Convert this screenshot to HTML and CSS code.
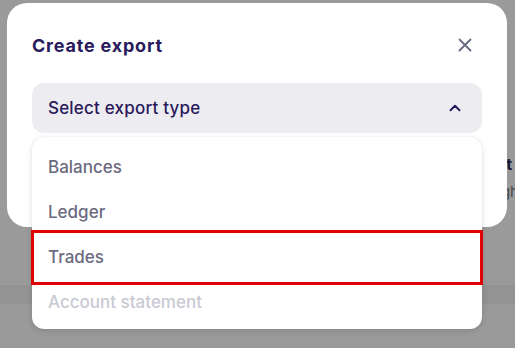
FILE: index.html
```html
<!DOCTYPE html>
<html lang="en">
<head>
  <meta charset="UTF-8">
  <title>Create export</title>
  <link rel="stylesheet" href="styles.css">
</head>
<body>

<div class="page">
  <div class="page-text">
    <div class="page-title">Last export</div>
    <div class="page-sub">Available through</div>
  </div>
  <div class="page-band"></div>
</div>

<div class="modal">
  <div class="modal-head">
    <h3>Create export</h3>
    <svg class="close" width="14" height="14" viewBox="0 0 14 14">
      <path d="M1.5 1.5 L12.5 12.5 M12.5 1.5 L1.5 12.5" stroke="#686a80" stroke-width="1.8" stroke-linecap="round" fill="none"/>
    </svg>
  </div>
  <div class="select">
    <span>Select export type</span>
    <svg width="12" height="8" viewBox="0 0 12 8">
      <path d="M1.5 6.2 L6 1.8 L10.5 6.2" stroke="#2b1a5e" stroke-width="2" stroke-linecap="round" stroke-linejoin="round" fill="none"/>
    </svg>
  </div>

  <div class="menu">
    <div class="item">Balances</div>
    <div class="item">Ledger</div>
    <div class="item marked">Trades</div>
    <div class="item off">Account statement</div>
  </div>
</div>

</body>
</html>
```

FILE: styles.css
```css
body {
  margin: 0;
  width: 515px;
  height: 348px;
  overflow: hidden;
  background-color: #9a9a9a;
  font-family: Inter, "Noto Sans", sans-serif;
  position: relative;
}
.page {
  height: 348px;
  display: flex;
  flex-direction: column;
}
.page-text {
  margin-top: 154px;
  align-self: flex-end;
  text-align: right;
  white-space: nowrap;
}
.page-title {
  font-size: 16px;
  font-weight: 700;
  color: #1c1a33;
  margin-right: 3px;
}
.page-sub {
  margin-top: 8px;
  font-size: 15px;
  color: #4a4a4a;
  margin-right: -4px;
}
.page-band {
  margin-top: 84px;
  height: 19px;
  background-color: #939393;
}
.modal {
  position: absolute;
  left: 7px;
  top: 3px;
  width: 500px;
  height: 224px;
  background-color: #fff;
  border-radius: 20px;
  box-sizing: border-box;
  padding: 28px 25px 0 25px;
}
.modal-head {
  display: flex;
  justify-content: space-between;
  align-items: center;
  height: 28px;
}
.modal-head h3 {
  margin: 0;
  font-size: 18px;
  font-weight: 700;
  color: #2a1a5c;
  letter-spacing: 0.8px;
}
.close {
  margin-right: 10px;
}
.select {
  margin-top: 24px;
  height: 50px;
  background-color: #edecf0;
  border-radius: 12px;
  display: flex;
  align-items: center;
  justify-content: space-between;
  padding: 0 21px 0 16px;
  font-size: 17px;
  font-weight: 500;
  letter-spacing: 0.2px;
  color: #2a1a5c;
}
.menu {
  position: absolute;
  left: 25px;
  top: 134px;
  width: 450px;
  background-color: #fff;
  border-radius: 12px;
  box-shadow: 0 2px 6px rgba(0, 0, 0, 0.12), 0 0 1px rgba(0, 0, 0, 0.15);
  padding: 8px 0 4px 0;
}
.item {
  height: 45px;
  line-height: 45px;
  padding-left: 16px;
  font-size: 17px;
  font-weight: 500;
  color: #6b6a80;
  position: relative;
}
.off {
  color: #c9c9d3;
}
.marked::after {
  content: "";
  position: absolute;
  left: -1px;
  right: -1px;
  top: -5px;
  bottom: -5px;
  border: 3px solid #e00000;
}
```
